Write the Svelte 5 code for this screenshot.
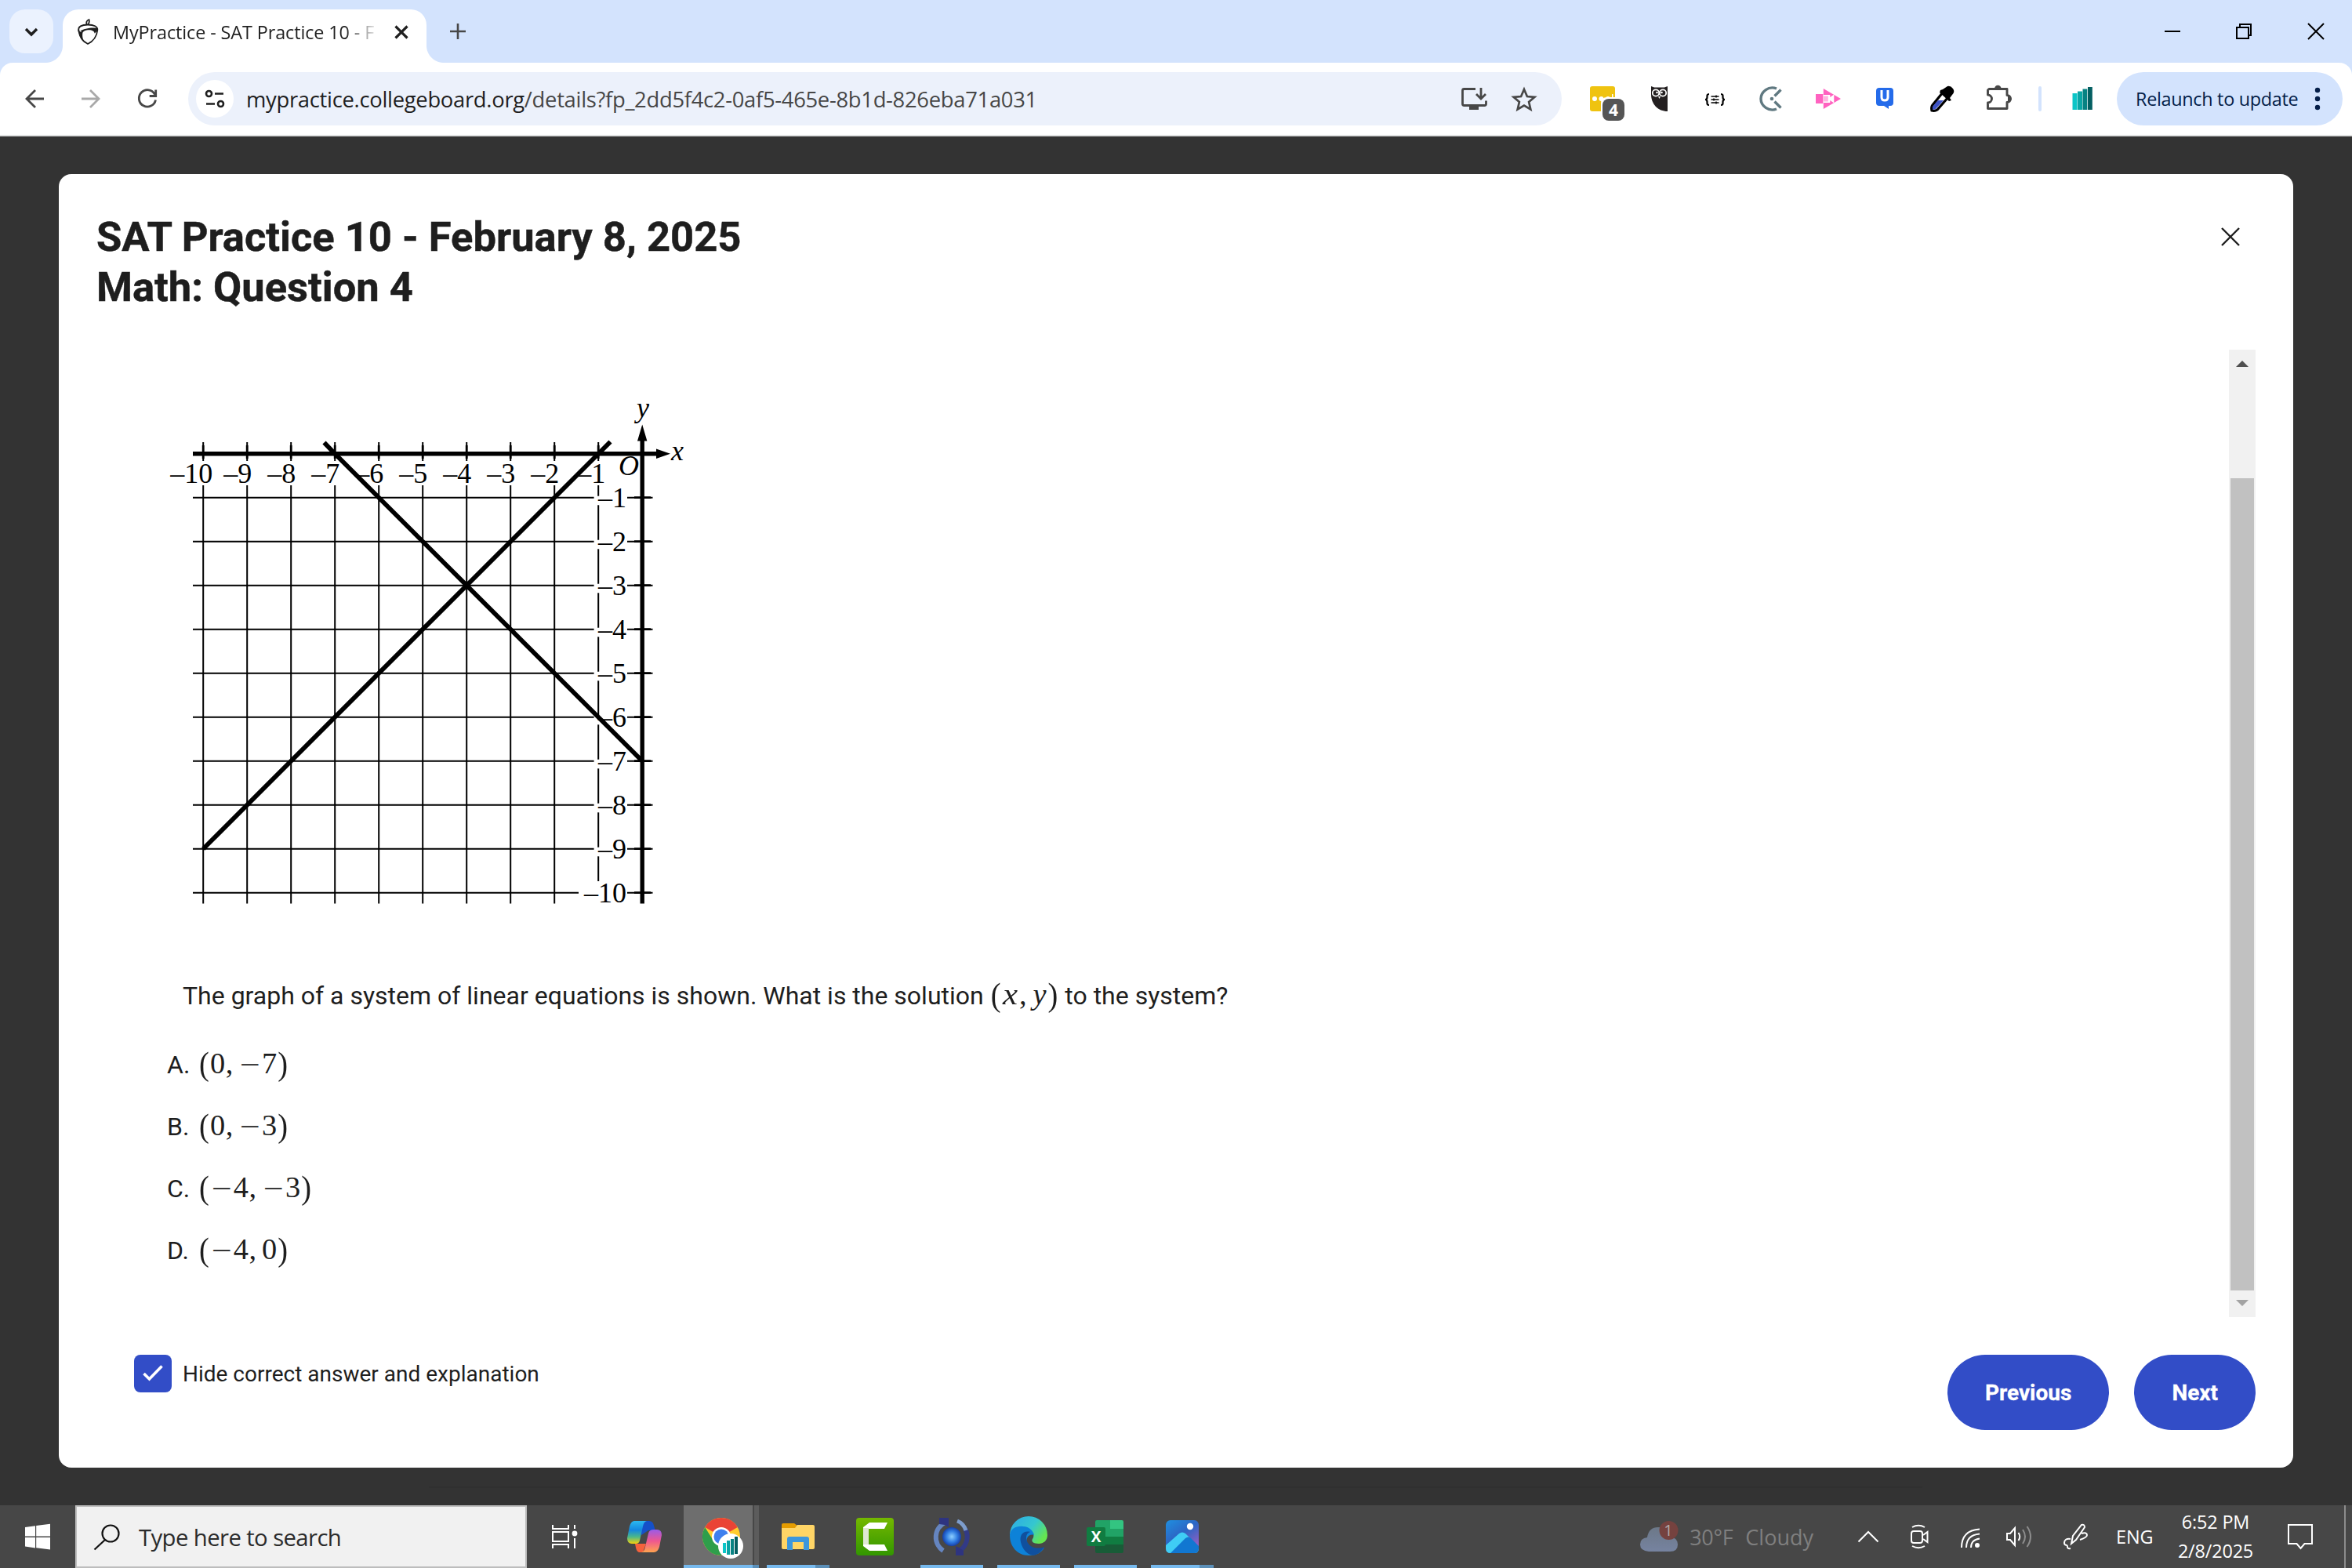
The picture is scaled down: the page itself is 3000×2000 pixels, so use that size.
<script>
  const unit = 56;
  const originX = 819.2;
  const originY = 578.7;
  const steps = Array.from({ length: 10 }, (_, i) => i + 1);
  const px = (n) => originX - n * unit;
  const py = (n) => originY + n * unit;

  const choices = [
    { letter: 'A.', value: '(0,−7)' },
    { letter: 'B.', value: '(0,−3)' },
    { letter: 'C.', value: '(−4,−3)' },
    { letter: 'D.', value: '(−4,0)' }
  ];

  const kinds = { '(': 'paren', ')': 'paren', ',': 'comma', '−': 'minus', x: 'varx', y: 'vary' };
  const kindOf = (ch) => kinds[ch] ?? 'digit';
</script>

{#snippet math(text)}
  <span class="math">{#each text.split('') as ch}<span class={kindOf(ch)}><i>{ch}</i></span>{/each}</span>
{/snippet}

<div class="screen">
  <header class="tabstrip">
    <button class="tabsearch" aria-label="Search tabs">
      <svg width="56" height="56" viewBox="12 12 56 56"><path d="M33 37l7 7 7-7" fill="none" stroke="#1f1f1f" stroke-width="3.4" /></svg>
    </button>
    <div class="tab">
      <svg class="favicon" width="32" height="36" viewBox="96 22 32 36">
        <path d="M110.500 31c-1-4 0-6 3-7 1 3 0 5-2 7" fill="none" stroke="#1e1e1e" stroke-width="1.800" />
        <path d="M100.500 38c-1.500-5 4-7.500 11.500-7.500s13 2.500 12.300 7c-1 9-5 14-12.300 17.500-6-3-10.500-9-11.500-17z" fill="#fff" stroke="#1e1e1e" stroke-width="1.800" />
        <path d="M99.500 36c1 3 3 4 6 4-1 5 0 11 4 14.500-5-3-8-8-9-13-1-2-1.500-4-1-5.500zM124.500 35c0 3-1.500 5-4 6.500 0-3-4-5-10-4-3 .5-4 1.500-5 3l-3-2c4-3 15-5 22-3.500z" fill="#1e1e1e" />
      </svg>
      <span class="tabtitle">MyPractice - SAT Practice 10 - F</span>
      <svg class="tabclose" width="20" height="20" viewBox="0 0 20 20"><path d="M2.500 2.500l15 15M17.500 2.500l-15 15" stroke="#1f1f1f" stroke-width="3.200" /></svg>
    </div>
    <svg class="newtab" width="24" height="24" viewBox="0 0 24 24"><path d="M12 2v20M2 12h20" stroke="#474747" stroke-width="2.600" /></svg>
    <div class="windowbtns">
      <svg width="92" height="80" viewBox="2724 0 92 80"><path d="M2761 40h20" stroke="#000" stroke-width="2" /></svg>
      <svg width="92" height="80" viewBox="2816 0 92 80"><path d="M2853 35h15v14h-15zM2857 35v-4h14v14h-4" fill="none" stroke="#000" stroke-width="2" /></svg>
      <svg width="92" height="80" viewBox="2908 0 92 80"><path d="M2944 30l20 20M2964 30l-20 20" stroke="#000" stroke-width="2" /></svg>
    </div>
  </header>

  <div class="toolbarwrap">
    <nav class="toolbar">
      <div class="navbtns">
        <svg width="72" height="68" viewBox="8 92 72 68"><path d="M56 126H34M45 115l-11 11 11 11" fill="none" stroke="#474747" stroke-width="2.800" /></svg>
        <svg width="72" height="68" viewBox="80 92 72 68"><path d="M104 126h22M115 115l11 11-11 11" fill="none" stroke="#a9a9a9" stroke-width="2.800" /></svg>
        <svg width="72" height="68" viewBox="152 92 72 68"><path d="M197.500 120.500A10.700 10.700 0 1 0 198.500 127.500M198.700 114.500v8h-8" fill="none" stroke="#474747" stroke-width="2.800" /></svg>
      </div>
      <div class="omnibox">
        <svg class="siteinfo" width="48" height="48" viewBox="250 102 48 48">
          <circle cx="274" cy="126" r="24" fill="#fff" />
          <g fill="none" stroke="#1f1f1f" stroke-width="2.600"><circle cx="266.500" cy="119.500" r="3.500" /><circle cx="281.500" cy="132.500" r="3.500" /><path d="M274 119.500h11M263 132.500h11" /></g>
        </svg>
        <span class="url"><b>mypractice.collegeboard.org</b>/details?fp_2dd5f4c2-0af5-465e-8b1d-826eba71a031</span>
        <svg class="install" width="36" height="36" viewBox="1862 108 36 36">
          <path d="M1882 113.500h-14.500a2 2 0 0 0-2 2v17a2 2 0 0 0 2 2h26a2 2 0 0 0 2-2v-4" fill="none" stroke="#474747" stroke-width="2.800" />
          <path d="M1874 134h12v6h-12z" fill="#474747" />
          <path d="M1889 112v14M1883 120l6 6 6-6" fill="none" stroke="#474747" stroke-width="2.800" />
        </svg>
        <svg class="star" width="36" height="36" viewBox="1926 108 36 36"><path d="M1944 114l3.900 9 9.500.8-7.300 6.300 2.200 9.400-8.300-5-8.300 5 2.200-9.400-7.300-6.300 9.500-.8z" fill="none" stroke="#474747" stroke-width="2.700" /></svg>
      </div>
      <div class="exts">
        <svg width="72" height="68" viewBox="2008 92 72 68">
          <rect x="2028" y="110" width="32" height="32" rx="3" fill="#efc310" />
          <g fill="#fff"><circle cx="2034" cy="126" r="3" /><circle cx="2042.500" cy="126" r="3" /><circle cx="2051" cy="126" r="3" /><rect x="2056" y="120" width="1.500" height="10" /></g>
          <path d="M2042 142v-10q0-8 8-8h12v18z" fill="#fff" />
          <rect x="2044" y="126" width="28" height="28" rx="8" fill="#555" />
          <text x="2058" y="147.500" text-anchor="middle" class="badge">4</text>
        </svg>
        <svg width="72" height="68" viewBox="2080 92 72 68">
          <path d="M2106 110l4 1.500h13l4-1.500v32c-12 0-21-9-21-22z" fill="#231f20" />
          <g fill="#231f20" stroke="#fff" stroke-width="1.800"><circle cx="2112" cy="118.500" r="4.200" /><circle cx="2121" cy="118.500" r="4.200" /></g>
          <circle cx="2113.500" cy="118" r="1.300" fill="#fff" /><circle cx="2119.500" cy="118" r="1.300" fill="#fff" /><path d="M2115 123l1.500 3 1.500-3z" fill="#fff" />
        </svg>
        <svg width="72" height="68" viewBox="2152 92 72 68">
          <g fill="none" stroke="#000" stroke-width="2.200"><path d="M2180 120c-3 0-2.500 2-2.500 4s-.5 3-2.500 3c2 0 2.500 1 2.500 3s-.5 4 2.500 4M2195 120c3 0 2.500 2 2.500 4s.5 3 2.500 3c-2 0-2.500 1-2.500 3s.5 4-2.500 4" /></g>
          <path d="M2182.500 123h10M2182.500 127h10M2182.500 131h10M2189 121.500v3M2186 125.500v3M2189 129.500v3" stroke="#000" stroke-width="1.500" />
        </svg>
        <svg width="72" height="68" viewBox="2224 92 72 68">
          <path d="M2266 113c-10-4-20 4-20 13s10 17 20 13" fill="none" stroke="#607981" stroke-width="3.400" />
          <path d="M2263.500 122.500l8-8M2263.500 129.500l8 8" stroke="#607981" stroke-width="3.400" /><circle cx="2260" cy="126" r="2.300" fill="#607981" />
        </svg>
        <svg width="72" height="68" viewBox="2296 92 72 68">
          <path d="M2316 120h9.300v12h-9.300zM2325.800 113l22.200 13-22.200 13z" fill="#ff62c0" /><path d="M2325.800 121h8.500v3l5-3.500v11l-5-3.500v3h-8.500z" fill="#fff" /><path d="M2325.800 122.500h6v7h-6z" fill="#ffb4e0" />
        </svg>
        <svg width="72" height="68" viewBox="2368 92 72 68">
          <path d="M2397 112h14q4 0 4 4v15q0 4-4 4h-2v4l-6-4h-6q-4 0-4-4v-15q0-4 4-4z" fill="#246bea" />
          <path d="M2400 115v9q0 4 4 4t4-4v-9" fill="none" stroke="#fff" stroke-width="3" />
        </svg>
        <svg width="72" height="68" viewBox="2440 92 72 68">
          <path d="M2478 118l7 6-14 16q-3 2-7 1-1-4 1-7z" fill="#fff" stroke="#000" stroke-width="3.200" />
          <path d="M2472 128h7l-10 11-4 1v-4z" fill="#3c52c4" />
          <path d="M2475 115l3-1 6-4q4-1 7 3t-1 8l-3 4 2 3-3 1-12-11z" fill="#000" />
        </svg>
        <svg width="72" height="68" viewBox="2512 92 72 68">
          <path d="M2537 113.500h23v8a4.500 4.500 0 0 1 0 9v8h-24.500v-7.500a5 5 0 0 0 0-10v-6z" fill="none" stroke="#474747" stroke-width="2.900" stroke-linejoin="round" />
          <path d="M2544 113a4.300 4.300 0 0 1 8.600 0zM2561 121.500a4.500 4.500 0 0 1 0 9z" fill="#474747" />
        </svg>
      </div>
      <div class="divider"></div>
      <svg class="profile" width="72" height="68" viewBox="2620 92 72 68">
        <path d="M2643.500 119h6v21h-6z" fill="#0cc5c7" /><path d="M2650 116.500h6V140h-6z" fill="#0aa5a5" /><path d="M2656.500 113.500h5.800V140h-5.800z" fill="#078283" /><path d="M2663 111h5.800v29h-5.800z" fill="#045f62" />
      </svg>
      <button class="relaunch">Relaunch to update<svg width="8" height="30" viewBox="0 0 8 30"><g fill="#041e49"><circle cx="4" cy="4" r="3.200" /><circle cx="4" cy="15" r="3.200" /><circle cx="4" cy="26" r="3.200" /></g></svg></button>
    </nav>
  </div>

  <main class="page">
    <section class="modal">
      <div class="head">
        <h1>SAT Practice 10 - February 8, 2025<br />Math: Question 4</h1>
        <svg class="close" width="26" height="26" viewBox="0 0 26 26"><path d="M2 2l22 22M24 2L2 24" stroke="#1e1e1e" stroke-width="2.400" /></svg>
      </div>
      <div class="body">
        <div class="question">
          <svg class="graph" width="800" height="744" viewBox="123 446 800 744">
            <g stroke="#000" stroke-width="2">
              {#each steps as n}
                <path d="M{px(n)} 564V588" />
                {#if n === 1}
                  <path d="M{px(n)} 619V632.700" />
                {:else}
                  <path d="M{px(n)} 619V1152.500" />
                {/if}
                <path d="M246 {py(n)}H{n === 10 ? 738 : 757.600}M800 {py(n)}H832.500" />
                {#if n < 10}<path d="M{px(1)} {py(n) + 9.600}V{n === 9 ? 1124 : py(n + 1) - 2}" />{/if}
              {/each}
            </g>
            <g stroke="#000" stroke-width="2.800">
              {#each steps as n}
                <path d="M809 {py(n)}H830M{px(n)} 568V585" />
              {/each}
            </g>
            <path d="M246 {originY}H840M{originX} 560V1152.500" stroke="#000" stroke-width="5.400" />
            <path d="M837 572.500l18 6.200-18 6.200zM813 562.500l6.200-21 6.200 21z" />
            <path d="M413.500 564.500L{px(7)} {originY}L{originX} {py(7)}M{px(10)} {py(9)}L778.500 563.500" fill="none" stroke="#000" stroke-width="5.800" />
            <g class="ticks">
              {#each steps as n}
                <text x={px(n) - (n === 10 ? 42 : n === 1 ? 27 : 30)} y="615.700">–{n}</text>
                <text x="799" y={py(n) + 12.500} text-anchor="end">–{n}</text>
              {/each}
            </g>
            <g class="axes"><text x="812" y="532">y</text><text x="856" y="587">x</text><text x="789" y="606">O</text></g>
          </svg>
          <p>The graph of a system of linear equations is shown. What is the solution {@render math('(x,y)')} to the system?</p>
          <ul>
            {#each choices as c}
              <li><span class="letter">{c.letter}</span>{@render math(c.value)}</li>
            {/each}
          </ul>
        </div>
        <div class="scrollbar">
          <svg width="34" height="34" viewBox="0 0 34 34"><path d="M9 22l8-8 8 8z" fill="#505050" /></svg>
          <div class="thumb"></div>
          <svg width="34" height="34" viewBox="0 0 34 34"><path d="M9 12l8 8 8-8z" fill="#a3a3a3" /></svg>
        </div>
      </div>
      <div class="foot">
        <label class="hide">
          <svg width="48" height="48" viewBox="0 0 48 48"><rect width="48" height="48" rx="8" fill="#324dc7" /><path d="M12.500 24l7 7L35.500 14.500" fill="none" stroke="#fff" stroke-width="3.600" /></svg>
          <span>Hide correct answer and explanation</span>
        </label>
        <div class="actions"><button>Previous</button><button>Next</button></div>
      </div>
    </section>
    <div class="edge"></div>
  </main>

  <footer class="taskbar">
    <svg width="96" height="80" viewBox="0 1920 96 80"><path d="M32 1948l13-1.800v13.300H32zM46.200 1946L64 1943.800v15.700H46.200zM32 1961h13v13.400l-13-2zM46.200 1961H64v15.600l-17.800-2.400z" fill="#fff" /></svg>
    <div class="search">
      <svg width="36" height="36" viewBox="118 1941 36 36"><circle cx="141" cy="1955" r="10.500" fill="none" stroke="#111" stroke-width="2.200" /><path d="M134 1963l-13.500 12.500" stroke="#111" stroke-width="2.200" /></svg>
      <span>Type here to search</span>
    </div>
    <div class="apps">
      <svg width="102" height="80" viewBox="672 1920 102 80">
        <g fill="none" stroke="#fff" stroke-width="2"><path d="M705 1945v5h20v-5M705 1975v-5h20v5M705 1954h20v12h-20zM733 1945v5M733 1962v13" /></g><circle cx="733" cy="1956" r="3.400" fill="#fff" />
      </svg>
      <svg width="98" height="80" viewBox="774 1920 98 80">
        <defs>
          <linearGradient id="cpa" x1="0" y1="0" x2="0" y2="1"><stop offset="0" stop-color="#2bb8f0" /><stop offset=".4" stop-color="#1487e0" /><stop offset=".7" stop-color="#4bb88a" /><stop offset="1" stop-color="#f5d20c" /></linearGradient>
          <linearGradient id="cpb" x1="0" y1="0" x2="0" y2="1"><stop offset="0" stop-color="#9a5be8" /><stop offset=".5" stop-color="#ee5790" /><stop offset="1" stop-color="#ffa34f" /></linearGradient>
        </defs>
        <path d="M818 1940h10q5 0 6 6l2 6h-9l-9 6z" fill="#1550c9" />
        <path d="M810 1969h14l-4 11h-5q-3-1-4-6z" fill="#f5623c" />
        <path d="M809 1940h16q-4 1-5 7l-4 18q-1 4-5 4h-5q-6 0-6-7l3-15q2-7 6-7z" fill="url(#cpa)" />
        <path d="M834 1951h4q6 0 6 7l-3 15q-2 7-7 7h-16q4-1 5-7l4-17q1-5 7-5z" fill="url(#cpb)" />
      </svg>
      <svg width="98" height="80" viewBox="872 1920 98 80">
        <path d="M872 1920h88v80h-88z" fill="#6e6e6e" /><path d="M962 1920h6v80h-6z" fill="#5c5c5c" />
        <path d="M872 1996h88v4h-88z" fill="#76b9ed" /><path d="M960 1996h8v4h-8z" fill="#5b8fb8" />
        <circle cx="920" cy="1960" r="24" fill="#ffcd2e" />
        <path d="M920 1960L899.200 1948A24 24 0 0 1 940.800 1948z" fill="#ea4335" />
        <path d="M920 1984A24 24 0 0 1 899.200 1948L910.500 1966 920 1972 930 1968z" fill="#2e9e4b" />
        <circle cx="920" cy="1960" r="12" fill="#fff" /><circle cx="920" cy="1960" r="9.500" fill="#3f7fee" />
        <circle cx="932" cy="1972" r="16" fill="#fff" />
        <path d="M922 1968h4v13h-4z" fill="#0cc5c7" /><path d="M927 1965h4v18h-4z" fill="#0aa5a5" /><path d="M932 1963h4v20h-4z" fill="#078283" /><path d="M937 1960h4v22h-4z" fill="#045f62" />
      </svg>
      <svg width="98" height="80" viewBox="970 1920 98 80">
        <path d="M978 1996h62v4h-62z" fill="#76b9ed" /><path d="M1040 1996h18v4h-18z" fill="#5b8fb8" />
        <path d="M999 1943h14l4 3v3h-20v-4q0-2 2-2z" fill="#e59c00" /><path d="M997 1949h17l3-4h20q2 0 2 2v27q0 2-2 2h-38q-2 0-2-2z" fill="#ffd566" />
        <path d="M1004 1977v-14q0-3 3-3h22q3 0 3 3v14h-7v-10h-14v10z" fill="#3d97dd" />
      </svg>
      <svg width="98" height="80" viewBox="1068 1920 98 80">
        <defs><linearGradient id="cam" x1="0" y1="0" x2="0" y2="1"><stop offset="0" stop-color="#74b800" /><stop offset="1" stop-color="#329600" /></linearGradient></defs>
        <rect x="1092" y="1936" width="48" height="48" rx="4" fill="url(#cam)" />
        <path d="M1109 1942h23l-4 8h-20v20h20l4 8h-23l-8-6v-24z" fill="#fff" /><path d="M1101 1949h7v21h-7z" fill="#dfe8d4" />
      </svg>
      <svg width="98" height="80" viewBox="1166 1920 98 80">
        <defs><radialGradient id="orb"><stop offset="0" stop-color="#8ed0ff" /><stop offset=".6" stop-color="#2f7be0" /><stop offset="1" stop-color="#1740a8" /></radialGradient></defs>
        <path d="M1174 1996h80v4h-80z" fill="#76b9ed" />
        <path d="M1205 1942a21 21 0 0 0-2 36" fill="none" stroke="#6585c0" stroke-width="6" /><path d="M1222 1979a21 21 0 0 0 9-29" fill="none" stroke="#323a86" stroke-width="6" />
        <path d="M1221 1940q8 3 11 12" fill="none" stroke="#7d9dcc" stroke-width="5" /><path d="M1198 1936h12v12l-5-3-7-1zM1219 1972l4 2 6 4v6h-10z" fill="#2e3480" />
        <circle cx="1214" cy="1960" r="12" fill="url(#orb)" />
      </svg>
      <svg width="98" height="80" viewBox="1264 1920 98 80">
        <defs><linearGradient id="edg" x1="0" y1="0" x2="1" y2=".6"><stop offset="0" stop-color="#2da9e8" /><stop offset=".6" stop-color="#35c7cf" /><stop offset="1" stop-color="#65e650" /></linearGradient></defs>
        <path d="M1272 1996h80v4h-80z" fill="#76b9ed" />
        <path d="M1288 1958a24 24 0 0 1 48 0c0 7-5 11-11 11-7 0-10-3-8-6 3-4 1-9-4-12-9-5-20-2-25 7z" fill="url(#edg)" />
        <path d="M1288 1958c1-9 9-12 17-11 8 0 13 6 14 11-7-2-11 4-9 11 2 9 12 11 22 5-4 7-11 10-20 10-14 0-24-11-24-26z" fill="#0d82d8" />
        <path d="M1302 1967c-2-9 3-15 12-13-6 2-6 9-3 14 4 7 14 8 21 5-3 6-9 10-14 11-8-1-14-8-16-17z" fill="#10509e" />
      </svg>
      <svg width="98" height="80" viewBox="1362 1920 98 80">
        <path d="M1370 1996h80v4h-80z" fill="#76b9ed" />
        <rect x="1397" y="1939" width="36" height="42" rx="2" fill="#185c37" /><path d="M1397 1941q0-2 2-2h17v11h-19zM1397 1950h19v10h-19z" fill="#21a366" /><path d="M1416 1939h15q2 0 2 2v9h-17z" fill="#33c481" /><path d="M1416 1950h17v10h-17z" fill="#21a366" /><path d="M1397 1960h36v10h-36z" fill="#107c41" />
        <rect x="1386" y="1948" width="24" height="24" rx="2" fill="#107c41" /><text x="1398" y="1967" text-anchor="middle" class="xl">X</text>
      </svg>
      <svg width="98" height="80" viewBox="1460 1920 98 80">
        <defs><linearGradient id="pho" x1="0" y1="0" x2=".7" y2="1"><stop offset="0" stop-color="#1f8fe0" /><stop offset=".5" stop-color="#2c65c4" /><stop offset="1" stop-color="#9a5fc4" /></linearGradient></defs>
        <path d="M1468 1996h62v4h-62z" fill="#76b9ed" /><path d="M1530 1996h18v4h-18z" fill="#5b8fb8" />
        <rect x="1487" y="1939" width="42" height="42" rx="6" fill="url(#pho)" /><circle cx="1518" cy="1947" r="4.200" fill="#fff" />
        <path d="M1487 1971l17-15q4-3 8 0l17 17v2q0 6-6 6h-30q-6 0-6-6z" fill="#3fcdf5" /><path d="M1493 1981l19-19q4-3 7 0l10 10v3q0 6-6 6z" fill="#1177d1" />
      </svg>
    </div>
    <div class="tray">
      <svg class="cloud" width="54" height="52" viewBox="2088 1930 54 52">
        <defs><linearGradient id="cld" x1="0" y1="0" x2="0" y2="1"><stop offset="0" stop-color="#6c7888" /><stop offset="1" stop-color="#7683a0" /></linearGradient></defs>
        <path d="M2102 1975q-11-1-11-9 0-8 9-9 2-13 14-13 11 0 14 12 11 1 11 10 0 9-10 9z" fill="url(#cld)" />
        <circle cx="2127.500" cy="1948" r="12" fill="#75423f" /><text x="2127" y="1955" text-anchor="middle" class="alert">1</text>
      </svg>
      <span class="weather">30°F</span><span class="weather sky">Cloudy</span>
      <svg class="icons" width="330" height="80" viewBox="2355 1920 330 80">
        <g fill="none" stroke="#fff" stroke-width="2">
          <path d="M2370.500 1966.500l12.500-12.500 12.500 12.500" />
          <rect x="2438" y="1953" width="14" height="15" rx="3" /><path d="M2453 1958l5.500-4v13l-5.500-4M2439 1948q8-4.500 16 0M2439 1972q8 4.500 16 0" />
          <path d="M2502 1974q0-22 23-23.500M2508 1974q0-16 17-17.500M2514 1974q0-10 11-11.500" />
          <path d="M2560 1956h4l6-7v22l-6-7h-4zM2574.500 1955q3.500 5 0 10" />
          <path d="M2580 1951q6 9 0 18M2585.500 1947q9 13 0 26" stroke="#8d8d8d" />
          <path d="M2642 1969l2-10 11-14q4-1 4 3l-11 16zM2641 1963q-8-1-8 5 0 3 4 3M2637 1971q-1 5 4 4M2655 1956q7-2 7 2 0 3-9 6" />
        </g>
        <circle cx="2522" cy="1971" r="3" fill="#fff" />
      </svg>
      <span class="lang">ENG</span>
      <div class="clock"><span>6:52 PM</span><span>2/8/2025</span></div>
      <svg class="note" width="36" height="36" viewBox="2916 1942 36 36"><path d="M2919 1945h30v24h-9.500l-5 6-5-6H2919z" fill="none" stroke="#fff" stroke-width="2" /></svg>
      <div class="peek"></div>
    </div>
  </footer>
</div>

<style>
  :global(body) { margin: 0; overflow: hidden; }
  .screen { width: 3000px; height: 2000px; display: flex; flex-direction: column; background: #333; font-family: "Open Sans", "Noto Sans", sans-serif; color: #1f1f1f; overflow: hidden; }
  svg { display: block; flex: none; }
  button { border: 0; padding: 0; margin: 0; font: inherit; }
  span { white-space: nowrap; }

  .tabstrip { height: 80px; background: #d3e3fd; display: flex; align-items: flex-start; flex: none; box-sizing: border-box; padding-left: 12px; }
  .tabsearch { width: 56px; height: 56px; margin-top: 12px; border-radius: 20px; background: #ebf2fe; flex: none; }
  .tab { position: relative; width: 464px; height: 68px; margin: 12px 0 0 12px; background: #fff; border-radius: 20px 20px 0 0; display: flex; align-items: center; box-sizing: border-box; padding: 0 0 10px 16px; flex: none; }
  .tab::before, .tab::after { content: ""; position: absolute; bottom: 0; width: 22px; height: 22px; }
  .tab::before { left: -22px; background: radial-gradient(circle at 0 0, transparent 21.500px, #fff 22.500px); }
  .tab::after { right: -22px; background: radial-gradient(circle at 100% 0, transparent 21.500px, #fff 22.500px); }
  .tabtitle { margin-left: 16px; width: 337px; overflow: hidden; font-size: 23.400px; letter-spacing: -.1px; line-height: 40px; -webkit-mask-image: linear-gradient(90deg, #000 296px, transparent 340px); mask-image: linear-gradient(90deg, #000 296px, transparent 340px); }
  .tabclose { margin-left: 21px; }
  .newtab { margin: 28px 0 0 28px; }
  .windowbtns { margin-left: auto; display: flex; }

  .toolbarwrap { background: #d3e3fd; height: 94px; flex: none; }
  .toolbar { height: 92px; background: #fff; border-bottom: 2px solid #dfe1e1; border-radius: 16px 16px 0 0; display: flex; align-items: center; box-sizing: content-box; padding: 0 12px 0 8px; }
  .navbtns, .exts { display: flex; }
  .omnibox { width: 1752px; height: 68px; margin-left: 16px; border-radius: 34px; background: #ecf1fb; display: flex; align-items: center; box-sizing: border-box; padding: 0 30px 0 10px; }
  .url { margin-left: 16px; font-size: 27.400px; letter-spacing: -.3px; color: #474747; }
  .url b { font-weight: 400; color: #1f1f1f; }
  .install { margin-left: auto; }
  .star { margin-left: 28px; }
  .exts { margin-left: 16px; }
  .badge { font: 700 21px "Open Sans", sans-serif; fill: #fff; }
  .divider { width: 4px; height: 32px; margin-left: 16px; background: #d3e3fd; border-radius: 2px; }
  .profile { margin-left: 16px; }
  .relaunch { margin-left: 8px; width: 288px; height: 68px; border-radius: 34px; background: #d3e3fd; color: #041e49; font-size: 23.400px; letter-spacing: -.3px; display: flex; align-items: center; box-sizing: border-box; padding-left: 24px; }
  .relaunch svg { margin-left: 21px; }

  .page { height: 1746px; flex: none; display: flex; flex-direction: column; box-sizing: border-box; padding: 48px 75px 0; }
  .modal { height: 1650px; background: #fff; border-radius: 16px; display: flex; flex-direction: column; box-sizing: border-box; padding: 48px; font-family: Roboto, sans-serif; color: #1e1e1e; flex: none; }
  .edge { width: 1905px; height: 2px; margin: 24px 0 0 472px; background: #303030; flex: none; }
  .head { display: flex; justify-content: space-between; height: 128px; flex: none; }
  h1 { margin: 0; font-size: 52.500px; line-height: 64px; font-weight: 700; -webkit-text-stroke: .5px #1e1e1e; }
  .close { margin: 19px 19px 0 0; }
  .body { margin-top: 48px; height: 1234px; display: flex; justify-content: space-between; flex: none; }
  .question { width: 2400px; overflow: hidden; font-size: 32px; }
  .ticks { font: 36px "Liberation Serif", serif; }
  .axes { font: italic 36px "Liberation Serif", serif; }
  p { margin: 56px 0 0; padding-left: 110px; line-height: 48px; }
  ul { list-style: none; margin: 24.500px 0 0; padding: 0 0 0 90px; }
  li { height: 79px; line-height: 79px; }
  .letter { display: inline-block; width: 40px; }
  .math { display: inline-block; font-family: "Liberation Serif", serif; font-size: 38.400px; line-height: 1; }
  .math span { display: inline-block; text-align: center; }
  .math i { display: inline-block; font-style: normal; }
  .math .paren { width: .389em; }
  .math .paren i { transform: scaleY(1.120); }
  .math .digit { width: .5em; }
  .math .comma { width: .278em; margin-right: .167em; }
  .math .minus { width: .778em; }
  .math .minus i { transform: translateY(2px) scaleX(1.200); }
  .math .varx { width: .572em; }
  .math .vary { width: .49em; }
  .math .varx i, .math .vary i { font-style: italic; }
  .math .varx i { transform: scaleX(1.120); }
  .scrollbar { width: 34px; background: #f1f1f1; display: flex; flex-direction: column; align-items: center; }
  .thumb { width: 30px; height: 1036px; margin-top: 130px; background: #c1c1c1; }
  .foot { margin-top: 48px; display: flex; justify-content: space-between; align-items: flex-start; }
  .hide { margin-left: 48px; display: flex; align-items: center; font-size: 28px; }
  .hide span { margin-left: 14px; }
  .actions { display: flex; gap: 32px; }
  .actions button { height: 96px; padding: 0 48px; border-radius: 48px; background: #324dc7; color: #fff; font-size: 28px; font-weight: 700; -webkit-text-stroke: .3px #fff; }

  .taskbar { height: 80px; background: #474747; display: flex; flex: none; }
  .search { width: 576px; height: 80px; box-sizing: border-box; border: 2px solid #bdbdbd; background: #f1f1f1; display: flex; align-items: center; padding-left: 20px; color: #2b2b2b; font-size: 29.300px; letter-spacing: -.6px; }
  .search span { margin: 2px 0 0 23px; }
  .apps { display: flex; }
  .tray { margin-left: auto; display: flex; align-items: center; color: #fff; font-size: 23.400px; }
  .weather { color: #7f7f7f; font-size: 27px; margin-left: 12px; letter-spacing: -.3px; }
  .sky { margin-left: 16px; letter-spacing: 0; }
  .icons { margin-left: 42px; }
  .lang { margin-left: 14px; width: 48px; }
  .clock { width: 120px; margin-left: 19px; display: flex; flex-direction: column; text-align: center; line-height: 37.300px; letter-spacing: -.15px; }
  .alert { font: 20px "Open Sans", sans-serif; fill: #b0aaa9; }
  .xl { font: 700 19px "Open Sans", sans-serif; fill: #fff; }
  .note { margin-left: 30px; }
  .peek { width: 2px; height: 80px; margin: 0 8px 0 38px; background: #8d8d8d; }
</style>
